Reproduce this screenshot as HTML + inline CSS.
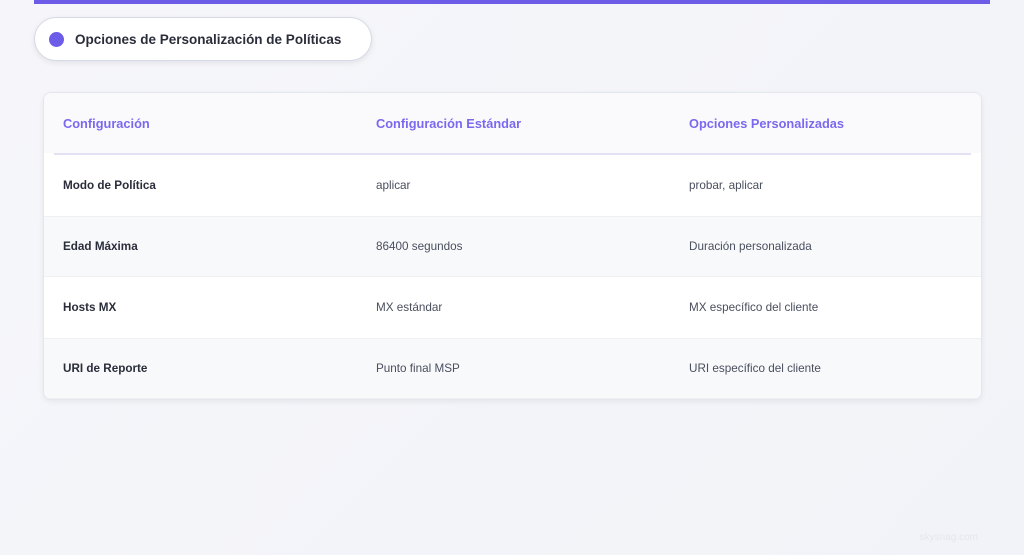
<!DOCTYPE html>
<html><head><meta charset="utf-8"><style>
*{margin:0;padding:0;box-sizing:border-box}
body{width:1024px;height:555px;overflow:hidden;background:linear-gradient(135deg,#f6f6fa,#f1f3f8);font-family:"Liberation Sans",sans-serif;position:relative}
.bar{position:absolute;left:34px;top:0;width:956px;height:4px;background:#6c5ce7}
.pill{position:absolute;left:34px;top:17px;width:338px;height:44px;border-radius:22px;background:#fff;border:1px solid #d6d9e6;box-shadow:0 2px 6px rgba(0,0,0,.08);display:flex;align-items:center}
.dot{width:15px;height:15px;border-radius:50%;background:#6c5ce7;margin-left:14px}
.pill span{margin-left:11px;font-size:13.5px;font-weight:bold;color:#2a2d3a}
.card{position:absolute;left:43px;top:92px;width:939px;height:308px;background:#fff;border:1px solid #e4e6ee;border-radius:8px;box-shadow:0 2px 6px rgba(0,0,0,.06);overflow:hidden}
.row{position:relative;height:61px}
.row div{position:absolute;top:0;height:100%;display:flex;align-items:center;font-size:11.7px;color:#4a4f5e}
.c1{left:19px}.c2{left:332px}.c3{left:645px}
.row.hdr{height:60px;background:#fafafd}
.hdr div{color:#7b68ee;font-weight:bold;font-size:12.8px}
.line{height:2px;background:#e3e1f3;margin:0 10px}
.row .c1.b{font-weight:bold;color:#2a2d3a}
.alt{background:#f8f9fb;box-shadow:inset 0 1px 0 #eef0f4,inset 0 -1px 0 #eef0f4}
.wm{position:absolute;right:46px;bottom:12px;font-size:10px;color:#e3e6ee}
</style></head><body>
<div class="bar"></div>
<div class="pill"><div class="dot"></div><span>Opciones de Personalización de Políticas</span></div>
<div class="card">
<div class="row hdr"><div class="c1">Configuración</div><div class="c2">Configuración Estándar</div><div class="c3">Opciones Personalizadas</div></div>
<div class="line"></div>
<div class="row"><div class="c1 b">Modo de Política</div><div class="c2">aplicar</div><div class="c3">probar, aplicar</div></div>
<div class="row alt"><div class="c1 b">Edad Máxima</div><div class="c2">86400 segundos</div><div class="c3">Duración personalizada</div></div>
<div class="row"><div class="c1 b">Hosts MX</div><div class="c2">MX estándar</div><div class="c3">MX específico del cliente</div></div>
<div class="row alt"><div class="c1 b">URI de Reporte</div><div class="c2">Punto final MSP</div><div class="c3">URI específico del cliente</div></div>
</div>
<div class="wm">skysnag.com</div>
</body></html>
